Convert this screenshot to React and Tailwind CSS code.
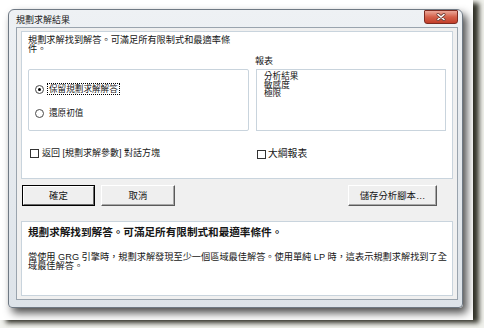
export default function App() {
  return (
    <div className="w-[484px] h-[328px] bg-[#f2f3ee] overflow-hidden font-['Liberation_Sans','Noto_Sans_CJK_TC',sans-serif] text-[#151515]">
      <div className="w-[473px] h-[320px] bg-white shadow-[6px_3px_5px_rgba(30,30,20,0.9)] pt-[9px] pl-[8px]">
        <div className="w-[455px] h-[299px] rounded-t-[6px] rounded-b-[4px] border border-[#6f7984] bg-gradient-to-b from-[#eef1f4] to-[#dde3e9] shadow-[4px_5px_8px_rgba(0,0,0,0.7)] flex flex-col pl-[7px] pr-[4px] pb-[7px]">
          {/* title bar */}
          <div className="h-[17px] flex items-start justify-between">
            <div className="text-[9px] leading-[9px] mt-[6px] text-[#222]">規劃求解結果</div>
            <div className="w-[34px] h-[14px] rounded-b-[3px] rounded-t-[1px] border border-[#7d2b21] bg-gradient-to-b from-[#eaa698] via-[#d4604a] to-[#c23e29] flex items-center justify-center">
              <svg width="10" height="8" viewBox="0 0 10 8">
                <path d="M2 1.5 L8 6.5 M8 1.5 L2 6.5" stroke="#6b3a33" strokeWidth="3" strokeLinecap="round" />
                <path d="M2 1.5 L8 6.5 M8 1.5 L2 6.5" stroke="#ffffff" strokeWidth="1.6" strokeLinecap="round" />
              </svg>
            </div>
          </div>
          {/* client area */}
          <div className="flex-1 border border-[#9aa4ae] bg-[#f0f0f0] px-[4px] pt-[3px] pb-[3px] flex flex-col">
            {/* top panel */}
            <div className="h-[148px] bg-white border border-[#c9d4dd] flex pl-[6px]">
              <div className="w-[221px] flex flex-col">
                <div className="pt-[4px] text-[9.2px] leading-[9px] whitespace-nowrap">
                  規劃求解找到解答。可滿足所有限制式和最適率條<br />件。
                </div>
                <div className="mt-[15px] h-[62px] border border-[#c9d4dd] rounded-[2px] pl-[6px] pt-[13px] flex flex-col">
                  <div className="h-[12px] flex items-center">
                    <div className="w-[9px] h-[9px] rounded-full border border-[#4a4a4a] bg-white flex items-center justify-center">
                      <div className="w-[3px] h-[3px] rounded-full bg-black" />
                    </div>
                    <div className="ml-[3px] h-[12px] px-[1px] border border-dotted border-black text-[8.6px] leading-[10px] whitespace-nowrap">保留規劃求解解答</div>
                  </div>
                  <div className="mt-[12px] h-[12px] flex items-center">
                    <div className="w-[9px] h-[9px] rounded-full border border-[#4a4a4a] bg-white" />
                    <div className="ml-[5px] text-[8.6px] leading-[10px] whitespace-nowrap">還原初值</div>
                  </div>
                </div>
                <div className="mt-[17px] h-[10px] flex items-center ml-[2px]">
                  <div className="w-[9px] h-[9px] border border-[#333] bg-white" />
                  <div className="ml-[3px] text-[9px] leading-[10px] whitespace-nowrap">返回 [規劃求解參數] 對話方塊</div>
                </div>
              </div>
              <div className="ml-[7px] w-[190px] flex flex-col">
                <div className="mt-[25px] -ml-[1px] text-[9px] leading-[9px]">報表</div>
                <div className="mt-[3px] h-[62px] border border-[#c9d4dd] bg-white pl-[7px] pt-[2px] text-[8.6px] leading-[8.6px]">
                  <div>分析結果</div>
                  <div>敏感度</div>
                  <div>極限</div>
                </div>
                <div className="mt-[18px] h-[10px] flex items-center ml-[1px]">
                  <div className="w-[9px] h-[9px] border border-[#333] bg-white" />
                  <div className="ml-[2px] text-[9.8px] leading-[10px] whitespace-nowrap">大綱報表</div>
                </div>
              </div>
            </div>
            {/* buttons */}
            <div className="mt-[6px] h-[21px] flex">
              <div className="ml-[1px] w-[73px] h-[21px] border border-black flex">
                <div className="flex-1 bg-[#efefef] border-t border-l border-t-white border-l-white border-r border-b border-r-[#6a6a6a] border-b-[#6a6a6a] flex items-center justify-center text-[9.4px] leading-[10px]">確定</div>
              </div>
              <div className="ml-[6px] w-[74px] h-[21px] bg-[#efefef] border-t border-l border-t-white border-l-white border-r border-b border-r-[#5a5a5a] border-b-[#5a5a5a] shadow-[inset_-1px_-1px_0_#a8a8a8] flex items-center justify-center text-[9.4px] leading-[10px]">取消</div>
              <div className="ml-auto mr-[16px] w-[89px] h-[21px] bg-[#efefef] border-t border-l border-t-white border-l-white border-r border-b border-r-[#5a5a5a] border-b-[#5a5a5a] shadow-[inset_-1px_-1px_0_#a8a8a8] flex items-center justify-center text-[9.4px] leading-[10px]">儲存分析腳本…</div>
            </div>
            {/* bottom panel */}
            <div className="mt-[15px] flex-1 bg-white border border-[#c9d4dd] pl-[6px] pt-[5px]">
              <div className="text-[10.6px] leading-[11px] font-bold whitespace-nowrap">規劃求解找到解答。可滿足所有限制式和最適率條件。</div>
              <div className="mt-[15px] text-[9.2px] leading-[9px] whitespace-nowrap">
                當使用 GRG 引擎時，規劃求解發現至少一個區域最佳解答。使用單純 LP 時，這表示規劃求解找到了全<br />域最佳解答。
              </div>
            </div>
          </div>
        </div>
      </div>
    </div>
  );
}
